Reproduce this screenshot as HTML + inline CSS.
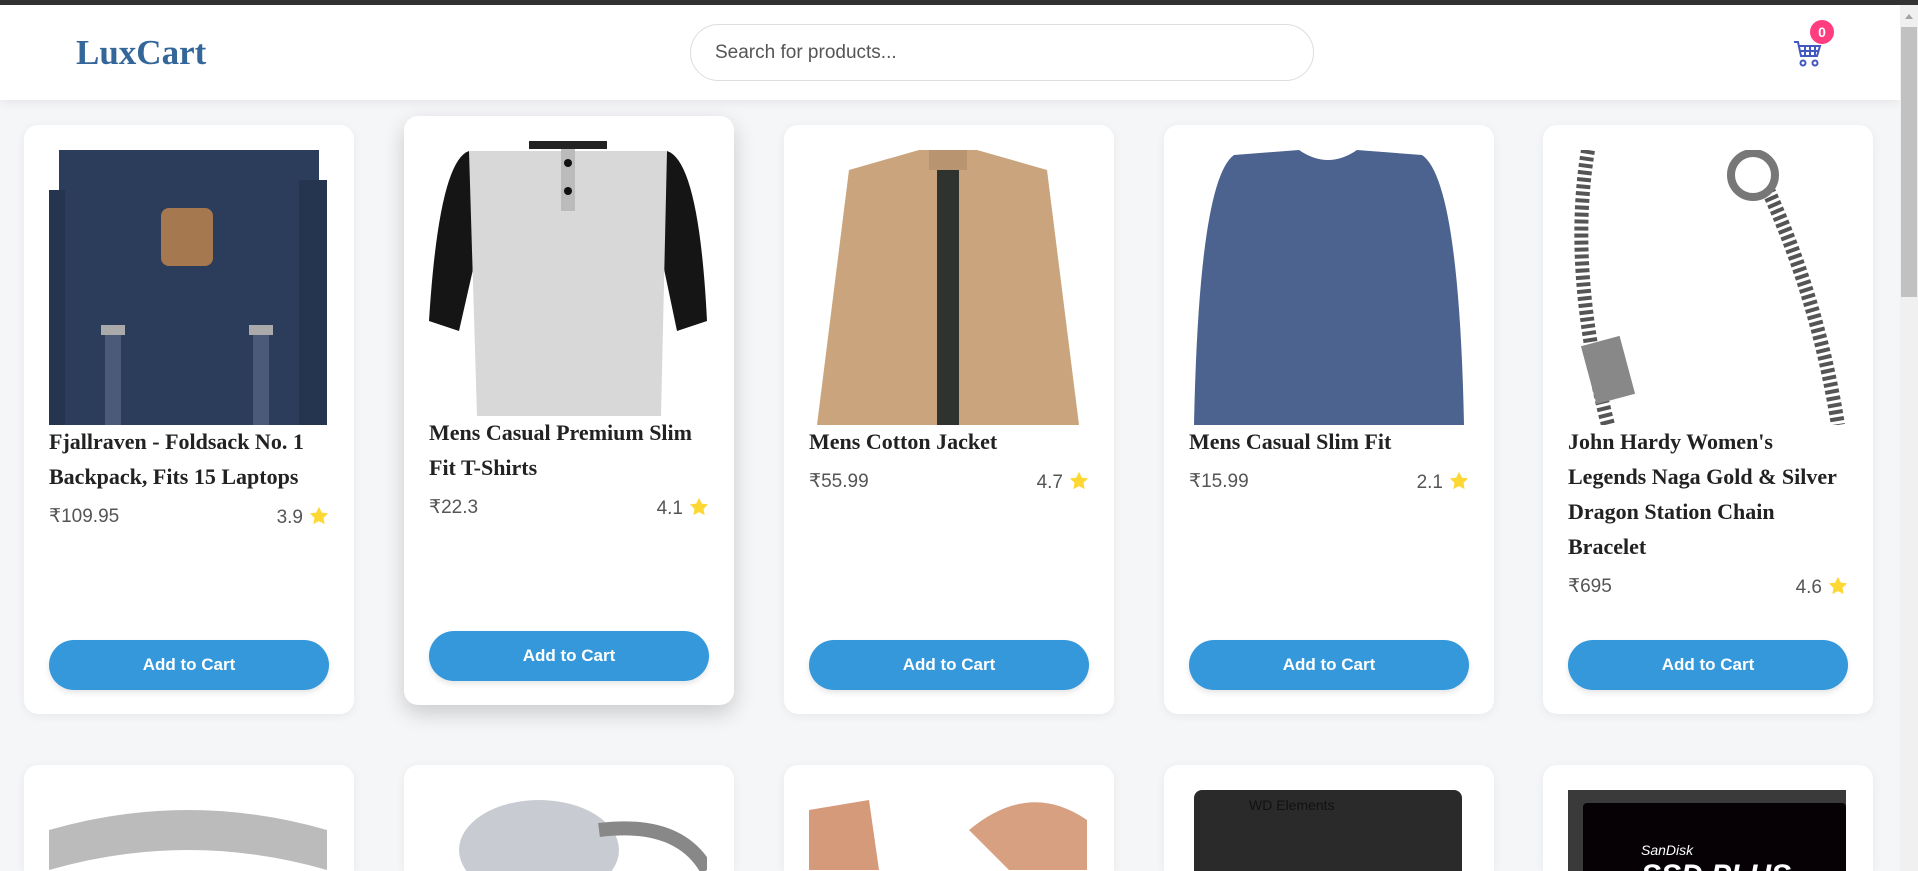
<!DOCTYPE html>
<html><head><meta charset="utf-8"><style>
*{margin:0;padding:0;box-sizing:border-box}
html{width:1918px;height:871px;overflow:hidden}
body{width:1918px;height:871px;overflow:hidden;background:#f5f6f8;font-family:"Liberation Sans",sans-serif;position:relative}
.top{position:absolute;left:0;top:0;width:1918px;height:5px;background:#333}
.hdr{position:absolute;left:0;top:5px;width:1900px;height:95px;background:#fff;box-shadow:0 2px 10px rgba(0,0,0,.08);z-index:2}
.logo{position:absolute;left:76px;top:28px;font-family:"Liberation Serif",serif;font-weight:bold;font-size:35px;color:#336699}
.search{position:absolute;left:690px;top:19px;width:624px;height:57px;border:1px solid #ddd;border-radius:29px;padding-left:24px;line-height:55px;font-size:19px;color:#555}
.cart{position:absolute;left:1794px;top:35px}
.badge{position:absolute;left:1810px;top:20px;width:24px;height:24px;border-radius:50%;background:#ff3d7f;color:#fff;font-size:14px;font-weight:bold;text-align:center;line-height:24px;z-index:3}
.sb{position:absolute;left:1900px;top:5px;width:18px;height:866px;background:#f0f0f0;z-index:3}
.sb i{position:absolute;left:1px;top:22px;width:16px;height:270px;background:#c1c1c1}
.sb b{position:absolute;left:5px;top:9px;border:4px solid transparent;border-bottom:5px solid #a3a3a3;border-top:0}
.card{position:absolute;width:330px;height:589px;background:#fff;border-radius:14px;box-shadow:0 2px 10px rgba(0,0,0,.06);overflow:hidden}
.card.r2{height:106px;border-radius:14px 14px 0 0}
.card.h{box-shadow:0 8px 22px rgba(0,0,0,.18)}
.img{position:absolute;left:25px;top:25px;width:278px;height:275px;overflow:hidden}
.r2 .img{height:81px}
.t{position:absolute;left:25px;top:299px;width:274px;font-family:"Liberation Serif",serif;font-weight:bold;font-size:22px;line-height:35px;color:#222}
.pr{font-family:"Liberation Sans",sans-serif;font-weight:normal;font-size:19px;color:#555;display:flex;justify-content:space-between;margin-top:12px;width:280px;line-height:22px}
.pr span svg{vertical-align:-2px;margin-left:6px}
.btn{position:absolute;left:25px;top:515px;width:280px;height:50px;border-radius:25px;background:#3498db;color:#fff;font-weight:bold;font-size:17px;text-align:center;line-height:50px;box-shadow:0 3px 6px rgba(0,0,0,.1)}
</style></head><body>
<div class="top"></div>
<div class="hdr">
<div class="logo">LuxCart</div>
<div class="search">Search for products...</div>
<svg class="cart" width="30" height="28" viewBox="0 0 30 28"><g fill="none" stroke="#4357c0" stroke-width="2"><path d="M0 2h4l3 14h16l3-10H5"/><path d="M6 11h19M11 6v10M16 6v10M21 6v10"/><circle cx="9" cy="23" r="2.5"/><circle cx="21" cy="23" r="2.5"/></g></svg>
</div>
<div class="badge">0</div>
<div class="sb"><b></b><i></i></div>

<div class="card" style="left:24px;top:125px">
<div class="img"><svg width="278" height="275"><rect x="0" y="0" width="278" height="275" fill="#fff"/><rect x="10" y="0" width="260" height="275" fill="#2c3d5b"/><rect x="0" y="40" width="16" height="235" fill="#26354f"/><rect x="250" y="30" width="28" height="245" fill="#26354f"/><rect x="112" y="58" width="52" height="58" rx="8" fill="#a6784f"/><rect x="52" y="175" width="24" height="10" fill="#aaa"/><rect x="200" y="175" width="24" height="10" fill="#aaa"/><rect x="56" y="185" width="16" height="90" fill="#4b5a78"/><rect x="204" y="185" width="16" height="90" fill="#4b5a78"/></svg></div>
<div class="t">Fjallraven - Foldsack No. 1 Backpack, Fits 15 Laptops<div class="pr"><span>₹109.95</span><span>3.9<svg width="20" height="19" viewBox="0 0 24 23"><path d="M12 1l3.4 7 7.6 1-5.5 5.3 1.3 7.7L12 18.3 5.2 22l1.3-7.7L1 9l7.6-1z" fill="#fdd835"/></svg></span></div></div>
<div class="btn">Add to Cart</div></div>

<div class="card h" style="left:404px;top:116px">
<div class="img"><svg width="278" height="275"><rect width="278" height="275" fill="#fff"/><path d="M40 10 Q10 20 0 180 L30 190 L55 80 Z" fill="#151515"/><path d="M238 10 Q270 20 278 180 L248 190 L225 80 Z" fill="#151515"/><path d="M40 10 L238 10 L232 275 L48 275 Z" fill="#d8d8d8"/><rect x="100" y="0" width="78" height="8" fill="#222"/><rect x="132" y="8" width="14" height="62" fill="#bbb"/><circle cx="139" cy="22" r="4" fill="#111"/><circle cx="139" cy="50" r="4" fill="#111"/></svg></div>
<div class="t">Mens Casual Premium Slim Fit T-Shirts<div class="pr"><span>₹22.3</span><span>4.1<svg width="20" height="19" viewBox="0 0 24 23"><path d="M12 1l3.4 7 7.6 1-5.5 5.3 1.3 7.7L12 18.3 5.2 22l1.3-7.7L1 9l7.6-1z" fill="#fdd835"/></svg></span></div></div>
<div class="btn">Add to Cart</div></div>

<div class="card" style="left:784px;top:125px">
<div class="img"><svg width="278" height="275"><rect width="278" height="275" fill="#fff"/><path d="M40 20 L110 0 L168 0 L238 20 L270 275 L8 275 Z" fill="#c9a47c"/><path d="M128 20 L150 20 L150 275 L128 275Z" fill="#2e3330"/><rect x="120" y="0" width="38" height="20" fill="#b89470"/></svg></div>
<div class="t">Mens Cotton Jacket<div class="pr"><span>₹55.99</span><span>4.7<svg width="20" height="19" viewBox="0 0 24 23"><path d="M12 1l3.4 7 7.6 1-5.5 5.3 1.3 7.7L12 18.3 5.2 22l1.3-7.7L1 9l7.6-1z" fill="#fdd835"/></svg></span></div></div>
<div class="btn">Add to Cart</div></div>

<div class="card" style="left:1164px;top:125px">
<div class="img"><svg width="278" height="275"><rect width="278" height="275" fill="#fff"/><path d="M45 5 L110 0 Q139 20 168 0 L233 5 Q270 30 275 275 L5 275 Q10 30 45 5Z" fill="#4c6390"/></svg></div>
<div class="t">Mens Casual Slim Fit<div class="pr"><span>₹15.99</span><span>2.1<svg width="20" height="19" viewBox="0 0 24 23"><path d="M12 1l3.4 7 7.6 1-5.5 5.3 1.3 7.7L12 18.3 5.2 22l1.3-7.7L1 9l7.6-1z" fill="#fdd835"/></svg></span></div></div>
<div class="btn">Add to Cart</div></div>

<div class="card" style="left:1543px;top:125px">
<div class="img"><svg width="278" height="275"><rect width="278" height="275" fill="#fff"/><g fill="none" stroke="#555" stroke-width="14" stroke-dasharray="4 3"><path d="M20 0 Q0 120 40 275"/><path d="M200 40 Q250 150 270 275"/></g><rect x="20" y="190" width="40" height="60" fill="#888" transform="rotate(-15 40 220)"/><circle cx="185" cy="25" r="22" fill="none" stroke="#777" stroke-width="8"/></svg></div>
<div class="t">John Hardy Women's Legends Naga Gold &amp; Silver Dragon Station Chain Bracelet<div class="pr"><span>₹695</span><span>4.6<svg width="20" height="19" viewBox="0 0 24 23"><path d="M12 1l3.4 7 7.6 1-5.5 5.3 1.3 7.7L12 18.3 5.2 22l1.3-7.7L1 9l7.6-1z" fill="#fdd835"/></svg></span></div></div>
<div class="btn">Add to Cart</div></div>

<div class="card r2" style="left:24px;top:765px"><div class="img"><svg width="278" height="81"><rect width="278" height="81" fill="#fff"/><path d="M0 40 Q139 0 278 40 L278 80 Q139 40 0 80Z" fill="#bbb"/></svg></div></div>
<div class="card r2" style="left:404px;top:765px"><div class="img"><svg width="278" height="81"><rect width="278" height="81" fill="#fff"/><ellipse cx="110" cy="60" rx="80" ry="50" fill="#c8ccd2"/><path d="M170 40 Q250 30 278 80" stroke="#888" stroke-width="14" fill="none"/></svg></div></div>
<div class="card r2" style="left:784px;top:765px"><div class="img"><svg width="278" height="81"><rect width="278" height="81" fill="#fff"/><path d="M0 20 L60 10 L70 80 L0 80Z" fill="#d49a7a"/><path d="M160 40 Q220 -10 278 30 L278 80 L200 80Z" fill="#d7a080"/></svg></div></div>
<div class="card r2" style="left:1164px;top:765px"><div class="img"><svg width="278" height="81"><rect width="278" height="81" fill="#fff"/><rect x="5" y="0" width="268" height="90" rx="8" fill="#2a2a2a"/><text x="60" y="20" font-family="Liberation Sans" font-size="14" fill="#111">WD Elements</text></svg></div></div>
<div class="card r2" style="left:1543px;top:765px"><div class="img"><svg width="278" height="81"><rect width="278" height="81" fill="#3a3a3a"/><rect x="15" y="13" width="263" height="80" rx="4" fill="#050105"/><text x="73" y="65" font-family="Liberation Sans" font-style="italic" font-size="14" fill="#fff">SanDisk</text><text x="73" y="95" font-family="Liberation Sans" font-style="italic" font-weight="bold" font-size="30" fill="#fff">SSD PLUS</text></svg></div></div>
</body></html>
